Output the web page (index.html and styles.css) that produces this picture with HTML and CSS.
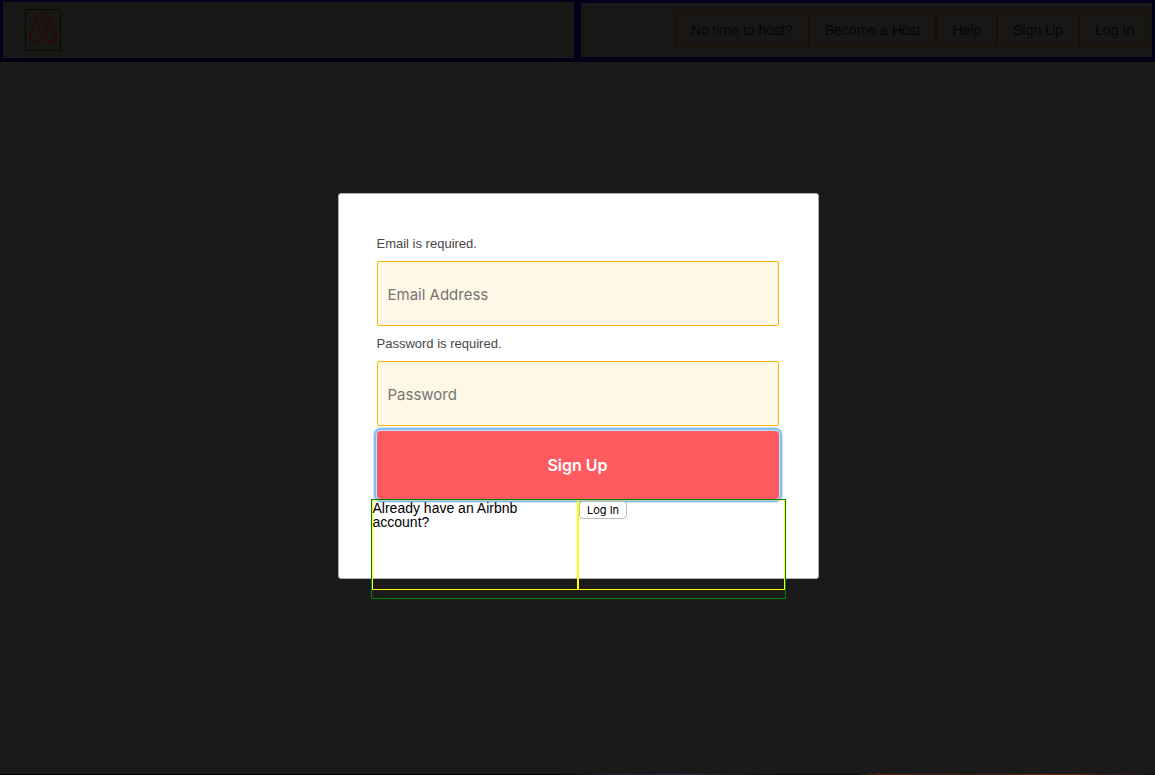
FILE: index.html
```html
<!DOCTYPE html>
<html lang="en">
<head>
<meta charset="utf-8">
<title>Sign Up</title>
<link rel="stylesheet" href="styles.css">
</head>
<body>
<header class="site-header">
  <div class="header-left">
    <a class="logo" href="#" aria-label="Home">
      <svg viewBox="0 0 34 40" width="34" height="40" aria-hidden="true">
        <path d="M16.7 26.5C13 22 11.4 19.8 12 17C13 12.2 20.4 12.2 21.4 17C22 19.8 20.4 22 16.7 26.5C13.4 30.4 11 31.3 9 31.3C5 31.3 2.4 28 3.9 24C6 18.5 10 10.5 12.5 5.5C14.5 1.8 18.9 1.8 20.9 5.5C23.4 10.5 27.4 18.5 29.5 24C31 28 28.4 31.3 24.4 31.3C22.4 31.3 20 30.4 16.7 26.5Z"/>
      </svg>
    </a>
  </div>
  <nav class="header-right">
    <a class="nav-link" href="#">No time to host?</a>
    <a class="nav-link" href="#">Become a Host</a>
    <a class="nav-link" href="#">Help</a>
    <a class="nav-link" href="#">Sign Up</a>
    <a class="nav-link" href="#">Log In</a>
  </nav>
</header>
<main class="backdrop">
  <form class="modal">
    <label class="error" for="email">Email is required.</label>
    <input class="field" id="email" type="email" placeholder="Email Address">
    <label class="error" for="password">Password is required.</label>
    <input class="field" id="password" type="password" placeholder="Password">
    <button class="submit" type="button">Sign Up</button>
    <div class="modal-footer">
      <div class="cell">Already have an Airbnb account?</div>
      <div class="cell"><button class="login" type="button">Log In</button></div>
    </div>
  </form>
</main>
<div class="bottom-edge"></div>
</body>
</html>
```
FILE: styles.css
```css
* {
  box-sizing: border-box;
}

body {
  margin: 0;
  min-height: 100vh;
  display: flex;
  flex-direction: column;
  background: #1a1a1a;
  font-family: "Liberation Sans", Arial, sans-serif;
  font-size: 14px;
}

.site-header {
  display: grid;
  grid-template-columns: 1fr 1fr;
  gap: 7px;
  height: 62px;
  padding: 2px 3px 3px;
  background: #00001a;
  border-bottom: 1px solid #000;
}

.header-left,
.header-right {
  display: flex;
  background: #191715;
}

.header-left {
  padding: 7px 22px;
}

.header-right {
  align-items: center;
  justify-content: flex-end;
  margin: 1px 0;
  padding-right: 2px;
}

.logo {
  width: 36px;
  height: 42px;
  border: 1px solid #000d00;
}

.logo svg {
  display: block;
  fill: none;
  stroke: #260c0d;
  stroke-width: 2;
}

.nav-link {
  height: 36px;
  padding: 0 15px;
  border: 1px solid #1a1100;
  color: #050505;
  line-height: 34px;
  text-decoration: none;
  white-space: nowrap;
}

.backdrop {
  flex: 1;
  display: flex;
  justify-content: center;
  align-items: flex-start;
  padding: 131px 0 40px 1px;
}

.modal {
  width: 481px;
  max-width: 100%;
  padding: 39px 39px 0 38px;
  border: 1px solid #aab0b5;
  border-radius: 3px;
  background: #fff;
}

.error {
  display: block;
  margin-bottom: 6px;
  color: #484848;
  font-size: 13px;
  line-height: 22px;
}

.field {
  display: block;
  width: 100%;
  height: 65px;
  margin: 0 0 7px;
  padding: 2px 10px 0;
  border: 1px solid #ffb400;
  border-radius: 2px;
  background: #fff8e6;
  font-family: Inter, sans-serif;
  font-size: 15px;
}

.field::placeholder {
  color: #757575;
}

.submit {
  position: relative;
  z-index: 1;
  display: block;
  width: 100%;
  height: 68px;
  margin-top: -2px;
  border: 0;
  border-radius: 4px;
  background: #ff5a5f;
  box-shadow: 0 0 0 1px #c4dfff, 0 0 0 3px #86bcfb, 0 0 1px 4px #cfe5ff;
  color: #fff;
  font: 600 16px Inter, sans-serif;
}

.modal-footer {
  position: relative;
  z-index: 2;
  display: flex;
  height: 100px;
  margin: 0 -7px -21px -6px;
  border: 1px solid #008000;
}

.cell {
  flex: 1;
  height: 90px;
  border: 1px solid #ff0;
  border-top-color: rgba(255, 255, 0, 0.3);
  color: #000;
  line-height: 14px;
}

.login {
  display: block;
  height: 18px;
  padding: 0 7px;
  border: 1px solid #bbb;
  border-radius: 4px;
  background: #fff;
  color: #000;
  font: 11px Inter, sans-serif;
}

.bottom-edge {
  height: 1px;
  background: linear-gradient(90deg, #000 0 48%, #1c1c26 52%, #30303c 60%, #222 62%, #080808 68%, #080808 74%, #5a2410 76%, #3a2020 84%, #6a2a08 92%, #2a1a20 97%, #111);
}
```
